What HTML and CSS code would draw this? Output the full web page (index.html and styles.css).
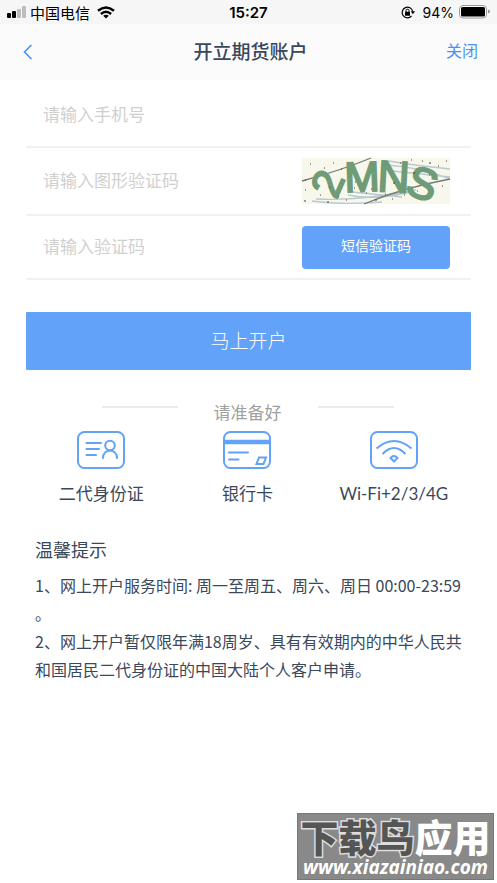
FILE: index.html
```html
<!DOCTYPE html>
<html lang="zh-CN">
<head>
<meta charset="utf-8">
<meta name="viewport" content="width=device-width, initial-scale=1">
<title>开立期货账户</title>
<link rel="stylesheet" href="styles.css">
</head>
<body>
<div class="status">
  <div class="status-side">
    <svg class="signal" width="20" height="12" viewBox="0 0 20 12"><rect x="0" y="7" width="4" height="5" rx="1"/><rect x="5" y="5" width="4" height="7" rx="1"/><g fill="#bdbdbd"><rect x="10" y="3" width="4" height="9" rx="1"/><rect x="15" y="0" width="4" height="12" rx="1"/></g></svg>
    <span>中国电信</span>
    <svg class="wifi" width="18" height="13" viewBox="0 0 18 13"><g fill="none" stroke="#000" stroke-width="2.4"><path d="M1 4.800Q9 -1.800 17 4.800"/><path d="M3.900 8Q9 3.600 14.100 8"/></g><path d="M6.200 9.700Q9 7.600 11.800 9.700L9 12.600Z"/></svg>
  </div>
  <span class="clock">15:27</span>
  <div class="status-side status-right">
    <svg class="lock" width="14" height="13" viewBox="0 0 14 13"><path d="M11.700 5.500A5.300 5.300 0 1 0 10.500 10" fill="none" stroke="#000" stroke-width="1.200"/><path d="M9.800 5.300H14L11.900 8.300Z"/><rect x="4" y="5.800" width="5" height="4" rx=".5"/><path d="M5 6V4.700a1.500 1.500 0 0 1 3 0V6" fill="none" stroke="#000"/></svg>
    <span class="percent">94%</span>
    <svg width="31" height="14" viewBox="0 0 31 14"><rect x=".5" y=".5" width="27" height="12.500" rx="3.500" fill="#fff" stroke="#999"/><rect x="2" y="2" width="24" height="9.500" rx="1.500"/><path d="M29 4.500q2 .5 2 2t-2 2z" fill="#999"/></svg>
  </div>
</div>
<header class="nav">
  <button class="back" type="button" aria-label="返回"><svg width="10" height="16" viewBox="0 0 10 16"><path d="M8.500 1L1.500 8l7 7" fill="none" stroke="#4a90f5" stroke-width="1.600"/></svg></button>
  <h1 class="title">开立期货账户</h1>
  <a class="close" href="#">关闭</a>
</header>
<main>
  <form class="form">
    <div class="row">
      <input class="field" type="tel" placeholder="请输入手机号" aria-label="手机号">
    </div>
    <div class="row">
      <input class="field field-raised" type="text" placeholder="请输入图形验证码" aria-label="图形验证码">
      <svg class="captcha" viewBox="0 0 148 46" role="img" aria-label="图形验证码图片">
        <rect width="148" height="46" fill="#f8f7ec"/>
        <g fill="none" stroke="#b9c9cf" stroke-width="1.300"><path d="M86 3q30 5 62 8M84 7q34 2 64 14M90 13l58 6M14 41q45 2 100-9M10 43q30 4 70 1M50 34l50 5M46 37q30 6 66-4"/></g>
        <g fill="none" stroke="#777a72" stroke-width="1.300"><path d="M0 23Q40 12 69 0M62 46Q100 30 148 21"/></g>
        <g class="glyphs"><text x="34" y="42" font-size="42" transform="rotate(-66 34 42)">2</text><text x="43" y="34" font-size="42" transform="rotate(-2 43 34)">M</text><text x="75" y="33" font-size="44" transform="rotate(3 75 33)">N</text><text x="105" y="40" font-size="44" transform="rotate(18 118 28)">S</text></g>
        <path d="M8 6h1M22 10h1M31 5h1M39 11h1M3 32h1M2 43h2M18 37h1M25 44h2M36 39h1M44 42h1M52 30h1M64 35h1M69 31h1M73 42h2M83 36h1M91 25h2M98 5h1M109 2h1M120 3h1M127 5h2M136 8h1M144 3h1M111 15h2M127 17h1M140 28h1M102 37h1M115 33h1M90 41h1M53 24h1M3 22h1M27 29h1" stroke="#444" stroke-width="1"/>
      </svg>
    </div>
    <div class="row row-short">
      <input class="field field-raised" type="text" placeholder="请输入验证码" aria-label="验证码">
      <button class="sms" type="button">短信验证码</button>
    </div>
    <button class="submit" type="submit">马上开户</button>
  </form>
  <section class="prepare">
    <h2 class="divider"><span>请准备好</span></h2>
    <ul class="items">
      <li class="item">
        <svg class="icon" viewBox="0 0 48 38"><rect x="1" y="1" width="46" height="36" rx="6.500"/><path d="M9.500 12h14.500M9.500 18h12.500M9.500 24h9.500" stroke-linecap="round"/><circle cx="33" cy="14.500" r="4.800"/><path d="M26 27c0-10 14-10 14 0" stroke-linecap="round"/></svg>
        <span>二代身份证</span>
      </li>
      <li class="item">
        <svg class="icon" viewBox="0 0 48 38"><rect x="1" y="1" width="46" height="36" rx="6.500"/><path d="M2 11h44" stroke-width="4.500"/><path d="M6 21.500h19M6 28.500h9.500" stroke-linecap="round"/><path d="M36 26.500h7l-2.500 6.500h-7z"/></svg>
        <span>银行卡</span>
      </li>
      <li class="item">
        <svg class="icon" viewBox="0 0 48 38"><rect x="1" y="1" width="46" height="36" rx="6.500"/><path d="M6.500 17.500q17.500-15 35 0M12.500 23q11.500-12 23 0"/><path d="M20.500 27q3.500-4 7 0L24 30.500z"/></svg>
        <span>Wi-Fi+2/3/4G</span>
      </li>
    </ul>
  </section>
  <section class="tips">
    <h2 class="tips-title">温馨提示</h2>
    <p>1、网上开户服务时间: 周一至周五、周六、周日 00:00-23:59<br>。</p>
    <p>2、网上开户暂仅限年满18周岁、具有有效期内的中华人民共和国居民二代身份证的中国大陆个人客户申请。</p>
  </section>
</main>
<aside class="mark">
  <div class="mark-name"><span class="mark-dark">下载鸟</span>应用</div>
  <div class="mark-url">www.xiazainiao.com</div>
</aside>
</body>
</html>
```
FILE: styles.css
```css
* { box-sizing: border-box; }
body {
  margin: 0;
  min-height: 100vh;
  background: #fff;
  color: #3a485b;
  font-family: "Noto Sans CJK SC", sans-serif;
  font-weight: 400;
}
h1, h2, p, ul { margin: 0; padding: 0; font-weight: inherit; }
button { border: 0; padding: 0; font: inherit; cursor: pointer; }

.status {
  display: flex;
  align-items: center;
  height: 24px;
  padding: 0 7px;
  background: #f6f6f6;
  color: #000;
  font-family: Inter, "Noto Sans CJK SC", sans-serif;
  font-size: 15px;
}
.status-side { display: flex; flex: 1; align-items: center; gap: 3px; }
.status-right { justify-content: flex-end; gap: 5px; }
.wifi { margin-left: 4px; }
.lock { margin-right: 3px; }
.percent { font-size: 14px; }
.clock { font-weight: 600; }

.nav {
  display: flex;
  align-items: center;
  height: 56px;
  padding: 0 19px;
  background: #fbfbfb;
}
.back { flex: 1; height: 40px; padding-left: 4px; background: none; text-align: left; }
.back svg { display: block; }
.title { padding-bottom: 4px; font-size: 19px; font-weight: 500; }
.close { flex: 1; padding-bottom: 4px; color: #4a90f5; font-size: 16px; text-align: right; text-decoration: none; }

.form { padding: 0 26px; }
.row {
  display: flex;
  align-items: center;
  height: 68px;
  padding: 0 21px 0 17px;
  border-bottom: 2px solid #f1f1f1;
}
.row-short { height: 64px; }
.field {
  flex: 1;
  min-width: 0;
  padding: 0;
  border: 0;
  outline: 0;
  background: none;
  color: #3a485b;
  font: inherit;
  font-size: 17px;
}
.field-raised { padding-bottom: 4px; }
.field::placeholder { color: #d0d0d0; }
.captcha { width: 148px; height: 46px; overflow: visible; }
.glyphs { fill: #6f9c76; stroke: #6f9c76; stroke-width: 2; font-family: "Liberation Sans", sans-serif; }
.sms {
  width: 148px;
  height: 43px;
  padding-bottom: 4px;
  border-radius: 4px;
  background: #62a2f8;
  color: #fff;
  font-size: 14px;
}
.submit {
  display: block;
  width: 100%;
  height: 58px;
  margin-top: 32px;
  padding-bottom: 4px;
  border-radius: 1px;
  background: #62a2f8;
  color: #fff;
  font-size: 19px;
  font-weight: 300;
}

.prepare { padding: 29px 30px 0 28px; }
.divider {
  display: flex;
  justify-content: center;
  gap: 36px;
  color: #a0a0a0;
  font-size: 17px;
  line-height: 26px;
}
.divider::before, .divider::after {
  content: "";
  width: 76px;
  height: 2px;
  margin-top: 7px;
  background: #ebebeb;
}
.items { display: grid; grid-template-columns: repeat(3, 1fr); list-style: none; }
.item {
  display: flex;
  flex-direction: column;
  align-items: center;
  gap: 12px;
  padding-top: 6px;
  font-family: Lato, "Noto Sans CJK SC", sans-serif;
  font-size: 17px;
  line-height: 26px;
}
.icon { width: 48px; height: 38px; fill: none; stroke: #62a2f8; stroke-width: 2; }

.tips { padding: 28px 34px 0 35px; font-size: 16px; line-height: 28px; }
.tips-title { margin-bottom: 8px; font-size: 18px; line-height: 28px; }

.mark {
  position: absolute;
  right: 3px;
  bottom: 3px;
  width: 197px;
  height: 67px;
  background: #898989;
  border: 1px solid #777;
  color: #fff;
  text-align: center;
  white-space: nowrap;
}
.mark-name { font-size: 38px; line-height: 44px; font-weight: 900; }
.mark-dark { color: #555; -webkit-text-stroke: 3px #ddd; paint-order: stroke fill; }
.mark-url { font-family: "Noto Sans", sans-serif; font-size: 19px; font-style: italic; font-weight: 700; line-height: 18px; }
```
